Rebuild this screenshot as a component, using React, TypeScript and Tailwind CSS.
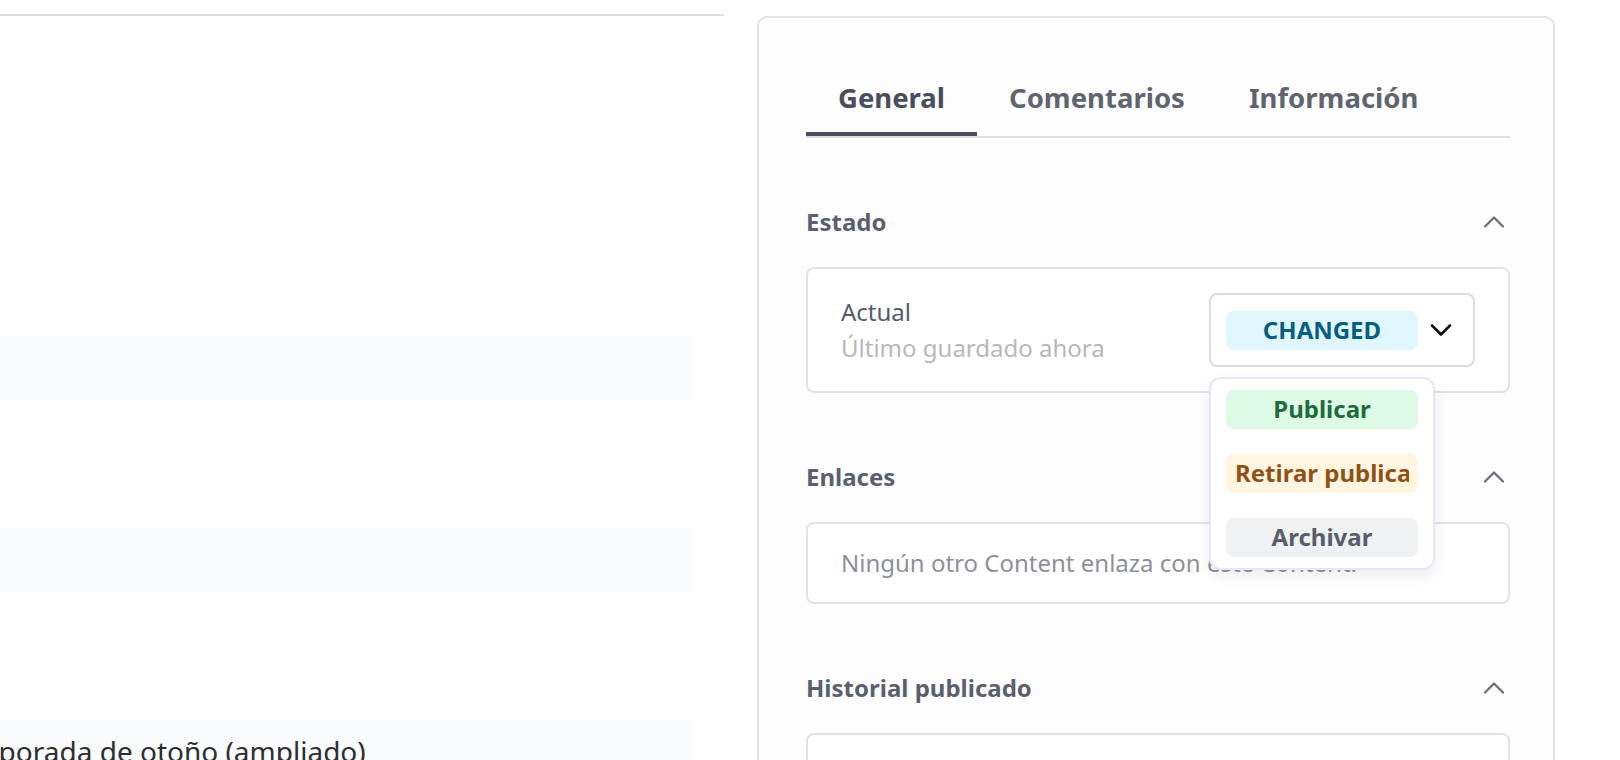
import { ChevronDown, ChevronUp } from 'lucide-react';

const badgeClass =
  'h-[39px] w-[192px] rounded-[8px] px-[9px] text-center text-[24px] font-bold leading-[38px]';

function Badge({ label, tone }: { label: string; tone: string }) {
  return (
    <div className={`${badgeClass} ${tone}`}>
      <span className="block overflow-hidden whitespace-nowrap">{label}</span>
    </div>
  );
}

function SectionHeader({ title }: { title: string }) {
  return (
    <div className="flex h-[36px] items-center justify-between">
      <h3 className="text-[24px] font-bold leading-[36px] text-[#5c606c]">{title}</h3>
      <ChevronUp size={36} strokeWidth={1.5} className="-mr-[2px] text-[#6a6e78]" />
    </div>
  );
}

export default function App() {
  const tabs = ['General', 'Comentarios', 'Información'];

  return (
    <div className="flex h-[760px] w-[1620px] overflow-hidden bg-white font-['Noto_Sans',sans-serif]">
      {/* Left editor area */}
      <div className="w-[724px] shrink-0 overflow-hidden pt-[14px]">
        <div className="border-t-2 border-[#dcdcdc]" />
        <div className="w-[692px]">
          <div className="h-[320px]" />
          <div className="h-[64px] bg-[#fafbfd]" />
          <div className="h-[128px]" />
          <div className="h-[64px] bg-[#fafbfd]" />
          <div className="h-[128px]" />
          <div className="h-[64px] overflow-hidden bg-[#fafbfd] pt-[10px]">
            <p className="-ml-[57px] whitespace-nowrap text-[28px] leading-[42px] text-[#2e2e30]">
              Temporada de otoño (ampliado)
            </p>
          </div>
        </div>
      </div>

      {/* Sidebar card */}
      <div className="ml-[33px] mt-[16px] w-[798px] shrink-0 rounded-t-[10px] border-2 border-b-0 border-[#e3e3e7] bg-[#fdfdfe] pl-[47px] pr-[43px] pt-[59px]">
        <div className="flex border-b-2 border-[#dedee2]">
          {tabs.map((t, i) => (
            <button
              key={t}
              className={`border-b-4 px-[32px] pb-[13px] text-[27.5px] font-bold leading-[42px] ${
                i === 0 ? 'border-[#4b4e5c] text-[#4a4e5a]' : 'border-transparent text-[#60646f]'
              }`}
            >
              {t}
            </button>
          ))}
        </div>

        <div className="mt-[66px]">
          <SectionHeader title="Estado" />
          <div className="mt-[27px] flex items-center justify-between rounded-[8px] border-2 border-[#e2e2e6] bg-white px-[33px] py-[24px]">
            <div className="text-[24px] leading-[36px]">
              <p className="text-[#565b66]">Actual</p>
              <p className="text-[#b7b7ba]">Último guardado ahora</p>
            </div>
            <div className="relative flex h-[74px] w-[266px] items-center rounded-[8px] border-2 border-[#dcdcdf] bg-white pl-[15px]">
              <Badge label="CHANGED" tone="bg-[#e0f6fd] text-[#075e7e]" />
              <ChevronDown size={36} strokeWidth={1.75} className="ml-[5px] text-[#111]" />

              <div className="absolute left-[-2px] top-[82px] z-10 flex w-[226px] flex-col gap-[25px] rounded-[12px] border-2 border-[#e6e6f8] bg-white px-[15px] py-[11px] shadow-[0_6px_14px_rgba(30,30,60,0.08)]">
                <Badge label="Publicar" tone="bg-[#dcfae6] text-[#1f6b3d]" />
                <Badge label="Retirar publicación" tone="bg-[#fff5e1] text-[#8f5216]" />
                <Badge label="Archivar" tone="bg-[#f0f1f3] text-[#5a5e69]" />
              </div>
            </div>
          </div>
        </div>

        <div className="mt-[66px]">
          <SectionHeader title="Enlaces" />
          <div className="mt-[27px] rounded-[8px] border-2 border-[#e2e2e6] bg-white px-[33px] py-[21px]">
            <p className="whitespace-nowrap text-[24px] leading-[36px] text-[#8d9099]">
              Ningún otro Content enlaza con este Content.
            </p>
          </div>
        </div>

        <div className="mt-[66px]">
          <SectionHeader title="Historial publicado" />
          <div className="mt-[27px] h-[120px] rounded-[8px] border-2 border-[#e2e2e6] bg-white" />
        </div>
      </div>
    </div>
  );
}
